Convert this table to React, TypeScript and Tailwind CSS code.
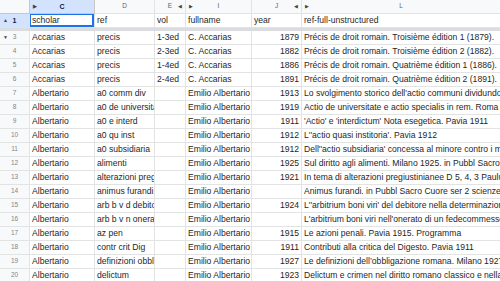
import React from 'react';

const ROWS: [number, string, string, string, string, string, string][] = [
  [3, 'Accarias', 'precis', '1-3ed', 'C. Accarias', '1879', 'Précis de droit romain. Troisième édition 1 (1879).'],
  [4, 'Accarias', 'precis', '2-3ed', 'C. Accarias', '1882', 'Précis de droit romain. Troisième édition 2 (1882).'],
  [5, 'Accarias', 'precis', '1-4ed', 'C. Accarias', '1886', 'Précis de droit romain. Quatrième édition 1 (1886).'],
  [6, 'Accarias', 'precis', '2-4ed', 'C. Accarias', '1891', 'Précis de droit romain. Quatrième édition 2 (1891).'],
  [7, 'Albertario', 'a0 comm div', '', 'Emilio Albertario', '1913', "Lo svolgimento storico dell'actio communi dividundo in diritto romano"],
  [8, 'Albertario', 'a0 de universitate', '', 'Emilio Albertario', '1919', 'Actio de universitate e actio specialis in rem. Roma 1919'],
  [9, 'Albertario', 'a0 e interd', '', 'Emilio Albertario', '1911', "'Actio' e 'interdictum' Nota esegetica. Pavia 1911"],
  [10, 'Albertario', 'a0 qu inst', '', 'Emilio Albertario', '1912', "L''actio quasi institoria'. Pavia 1912"],
  [11, 'Albertario', 'a0 subsidiaria', '', 'Emilio Albertario', '1912', "Dell''actio subsidiaria' concessa al minore contro i magistrati"],
  [12, 'Albertario', 'alimenti', '', 'Emilio Albertario', '1925', 'Sul diritto agli alimenti. Milano 1925. in Pubbl Sacro Cuore'],
  [13, 'Albertario', 'alterazioni pregiustinianee', '', 'Emilio Albertario', '1921', 'In tema di alterazioni pregiustinianee D 5, 4, 3 Paulus'],
  [14, 'Albertario', 'animus furandi', '', 'Emilio Albertario', '', 'Animus furandi. in Pubbl Sacro Cuore ser 2 scienze giuridiche'],
  [15, 'Albertario', 'arb b v d debitore', '', 'Emilio Albertario', '1924', "L''arbitrium boni viri' del debitore nella determinazione"],
  [16, 'Albertario', 'arb b v n onerato', '', 'Emilio Albertario', '', "L'arbitrium boni viri nell'onerato di un fedecommesso"],
  [17, 'Albertario', 'az pen', '', 'Emilio Albertario', '1915', 'Le azioni penali. Pavia 1915. Programma'],
  [18, 'Albertario', 'contr crit Dig', '', 'Emilio Albertario', '1911', 'Contributi alla critica del Digesto. Pavia 1911'],
  [19, 'Albertario', 'definizioni obbl', '', 'Emilio Albertario', '1927', "Le definizioni dell’obbligazione romana. Milano 1927"],
  [20, 'Albertario', 'delictum', '', 'Emilio Albertario', '1923', 'Delictum e crimen nel diritto romano classico e nella legislazione'],
];

const cols = 'grid grid-cols-[30px_65px_60px_31px_66px_50px_198px]';
const cell = 'border-r border-b border-[#e2e3e3] overflow-hidden whitespace-nowrap px-[2px] leading-[13px] text-[8.6px] text-[#1f1f1f]';
const rowHead = 'border-r border-b border-[#e2e3e3] bg-[#f8f9fa] text-[6.5px] text-[#80868b] flex items-center justify-center leading-none relative';

export default function App() {
  return (
    <div className="w-[500px] h-[281px] overflow-hidden bg-white" style={{ fontFamily: '"Liberation Sans", Arial, sans-serif' }}>
      {/* column headers */}
      <div className={`${cols} h-[14px] bg-[#f8f9fa] text-[6.5px] text-[#5f6368] leading-none`}>
        <div className="border-r border-b border-[#c7c7c7]" />
        <div className="border-r border-b border-[#c7c7c7] bg-[#d3e3fd] flex items-center justify-center relative font-bold text-[#041e49] text-[7px]">
          <span className="absolute left-[3px] text-[5px] text-[#444]">▶</span>C
        </div>
        <div className="border-r border-b border-[#e2e3e3] flex items-center justify-center">D</div>
        <div className="border-r border-b border-[#e2e3e3] flex items-center justify-center relative">
          E<span className="absolute right-[3px] text-[5px] text-[#444]">◀</span>
        </div>
        <div className="border-r border-b border-[#e2e3e3] flex items-center justify-center relative">
          <span className="absolute left-[3px] text-[5px] text-[#444]">▶</span>I
        </div>
        <div className="border-r border-b border-[#e2e3e3] flex items-center justify-center relative">
          J<span className="absolute right-[3px] text-[5px] text-[#444]">◀</span>
        </div>
        <div className="border-b border-[#e2e3e3] flex items-center justify-center relative">
          <span className="absolute left-[3px] text-[5px] text-[#444]">▶</span>L
        </div>
      </div>

      {/* frozen header row */}
      <div className={`${cols} h-[14px]`}>
        <div className={`${rowHead} !bg-[#d3e3fd] !text-[#041e49] font-bold text-[7px]`}>
          <span className="absolute left-[3px] text-[5px] text-[#444]">▲</span>1
        </div>
        <div className={`${cell} relative`}>
          scholar
          <div className="absolute inset-0 -left-px -top-px border-2 border-[#1a73e8]" />
        </div>
        <div className={cell}>ref</div>
        <div className={cell}>vol</div>
        <div className={cell}>fullname</div>
        <div className={cell}>year</div>
        <div className={`${cell} border-r-0`}>ref-full-unstructured</div>
      </div>
      <div className="h-[3px] bg-[#dadce0]" />

      {ROWS.map(([n, a, b, c, d, y, t]) => (
        <div key={n} className={`${cols} h-[14px]`}>
          <div className={rowHead}>
            {n === 3 && <span className="absolute left-[3px] text-[5px] text-[#444]">▼</span>}
            {n}
          </div>
          <div className={cell}>{a}</div>
          <div className={cell}>{b}</div>
          <div className={cell}>{c}</div>
          <div className={cell}>{d}</div>
          <div className={`${cell} text-right`}>{y}</div>
          <div className={`${cell} border-r-0 overflow-visible`}>{t}</div>
        </div>
      ))}
    </div>
  );
}
